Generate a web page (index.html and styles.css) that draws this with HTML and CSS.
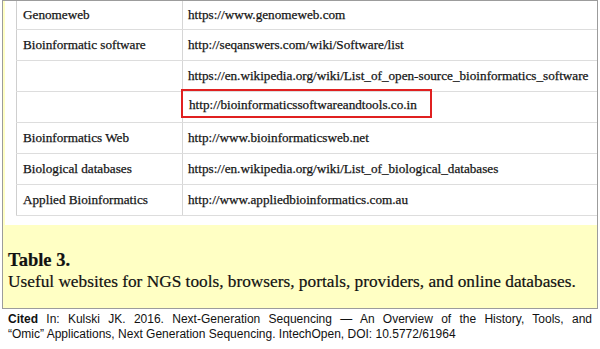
FILE: index.html
```html
<!DOCTYPE html>
<html>
<head>
<meta charset="utf-8">
<link rel="stylesheet" href="styles.css">
</head>
<body>
<div class="page">
  <div class="figure">
    <div class="panel">
      <table class="sites">
        <tr class="first"><td class="name">Genomeweb</td><td class="url">https://www.genomeweb.com</td></tr>
        <tr><td class="name">Bioinformatic software</td><td class="url">http://seqanswers.com/wiki/Software/list</td></tr>
        <tr><td class="name"></td><td class="url">https://en.wikipedia.org/wiki/List_of_open-source_bioinformatics_software</td></tr>
        <tr><td class="name"></td><td class="url marked"><span class="mark">http://bioinformaticssoftwareandtools.co.in</span></td></tr>
        <tr><td class="name">Bioinformatics Web</td><td class="url">http://www.bioinformaticsweb.net</td></tr>
        <tr><td class="name">Biological databases</td><td class="url">https://en.wikipedia.org/wiki/List_of_biological_databases</td></tr>
        <tr><td class="name">Applied Bioinformatics</td><td class="url">http://www.appliedbioinformatics.com.au</td></tr>
      </table>
    </div>
    <div class="caption">
      <div class="cap-title">Table 3.</div>
      <div class="cap-text">Useful websites for NGS tools, browsers, portals, providers, and online databases.</div>
    </div>
  </div>
  <p class="cite"><b>Cited</b>&nbsp;In: Kulski JK. 2016. Next-Generation Sequencing — An Overview of the History, Tools, and <span class="keep">“Omic” Applications,</span> Next Generation Sequencing. IntechOpen, DOI: 10.5772/61964</p>
</div>
</body>
</html>
```
FILE: styles.css
```css
html, body {
  margin: 0;
  padding: 0;
  background: #ffffff;
}
.page {
  width: 600px;
  height: 349px;
  overflow: hidden;
  background: #ffffff;
}
.figure {
  margin-left: 2px;
  width: 594px;
  border: 1px solid #9c9c9c;
  background: #ffffc4;
  padding-bottom: 16px;
}
.panel {
  margin-left: 2px;
  background: #ffffff;
  padding: 0 0 9px 11px;
}
.sites {
  width: 100%;
  border-collapse: collapse;
  font-family: "Liberation Serif", "Times New Roman", serif;
  font-size: 13.2px;
  color: #151515;
  -webkit-text-stroke: 0.25px #151515;
}
.sites td {
  height: 30px;
  padding: 0 0 0 6px;
  border: 1px solid #dddddd;
  border-right: none;
  vertical-align: middle;
  white-space: nowrap;
}
.sites tr.first td {
  height: 28px;
  border-top: none;
}
.sites td.name {
  width: 159px;
  border-left: 1px solid #cfcfcf;
}
.sites td.url {
  border-left: 1px solid #d6d6d6;
  padding-left: 5px;
}
.sites td.marked {
  vertical-align: top;
}
.mark {
  display: inline-block;
  margin: -3px 0 0 -7px;
  height: 25px;
  line-height: 27px;
  padding: 0 13px 0 6px;
  border: 2px solid #e02020;
}
.caption {
  padding: 24px 0 0 5px;
  font-family: "Liberation Serif", "Times New Roman", serif;
  color: #111111;
  -webkit-text-stroke: 0.2px #111111;
}
.cap-title {
  font-weight: bold;
  font-size: 18.5px;
  line-height: 22px;
}
.cap-text {
  font-size: 17.3px;
  line-height: 21px;
}
.cite {
  margin: 3px 0 0 8px;
  width: 584px;
  font-family: "Liberation Sans", Arial, sans-serif;
  font-size: 12px;
  line-height: 15px;
  text-align: justify;
  color: #111111;
}
.keep {
  white-space: nowrap;
}
```
